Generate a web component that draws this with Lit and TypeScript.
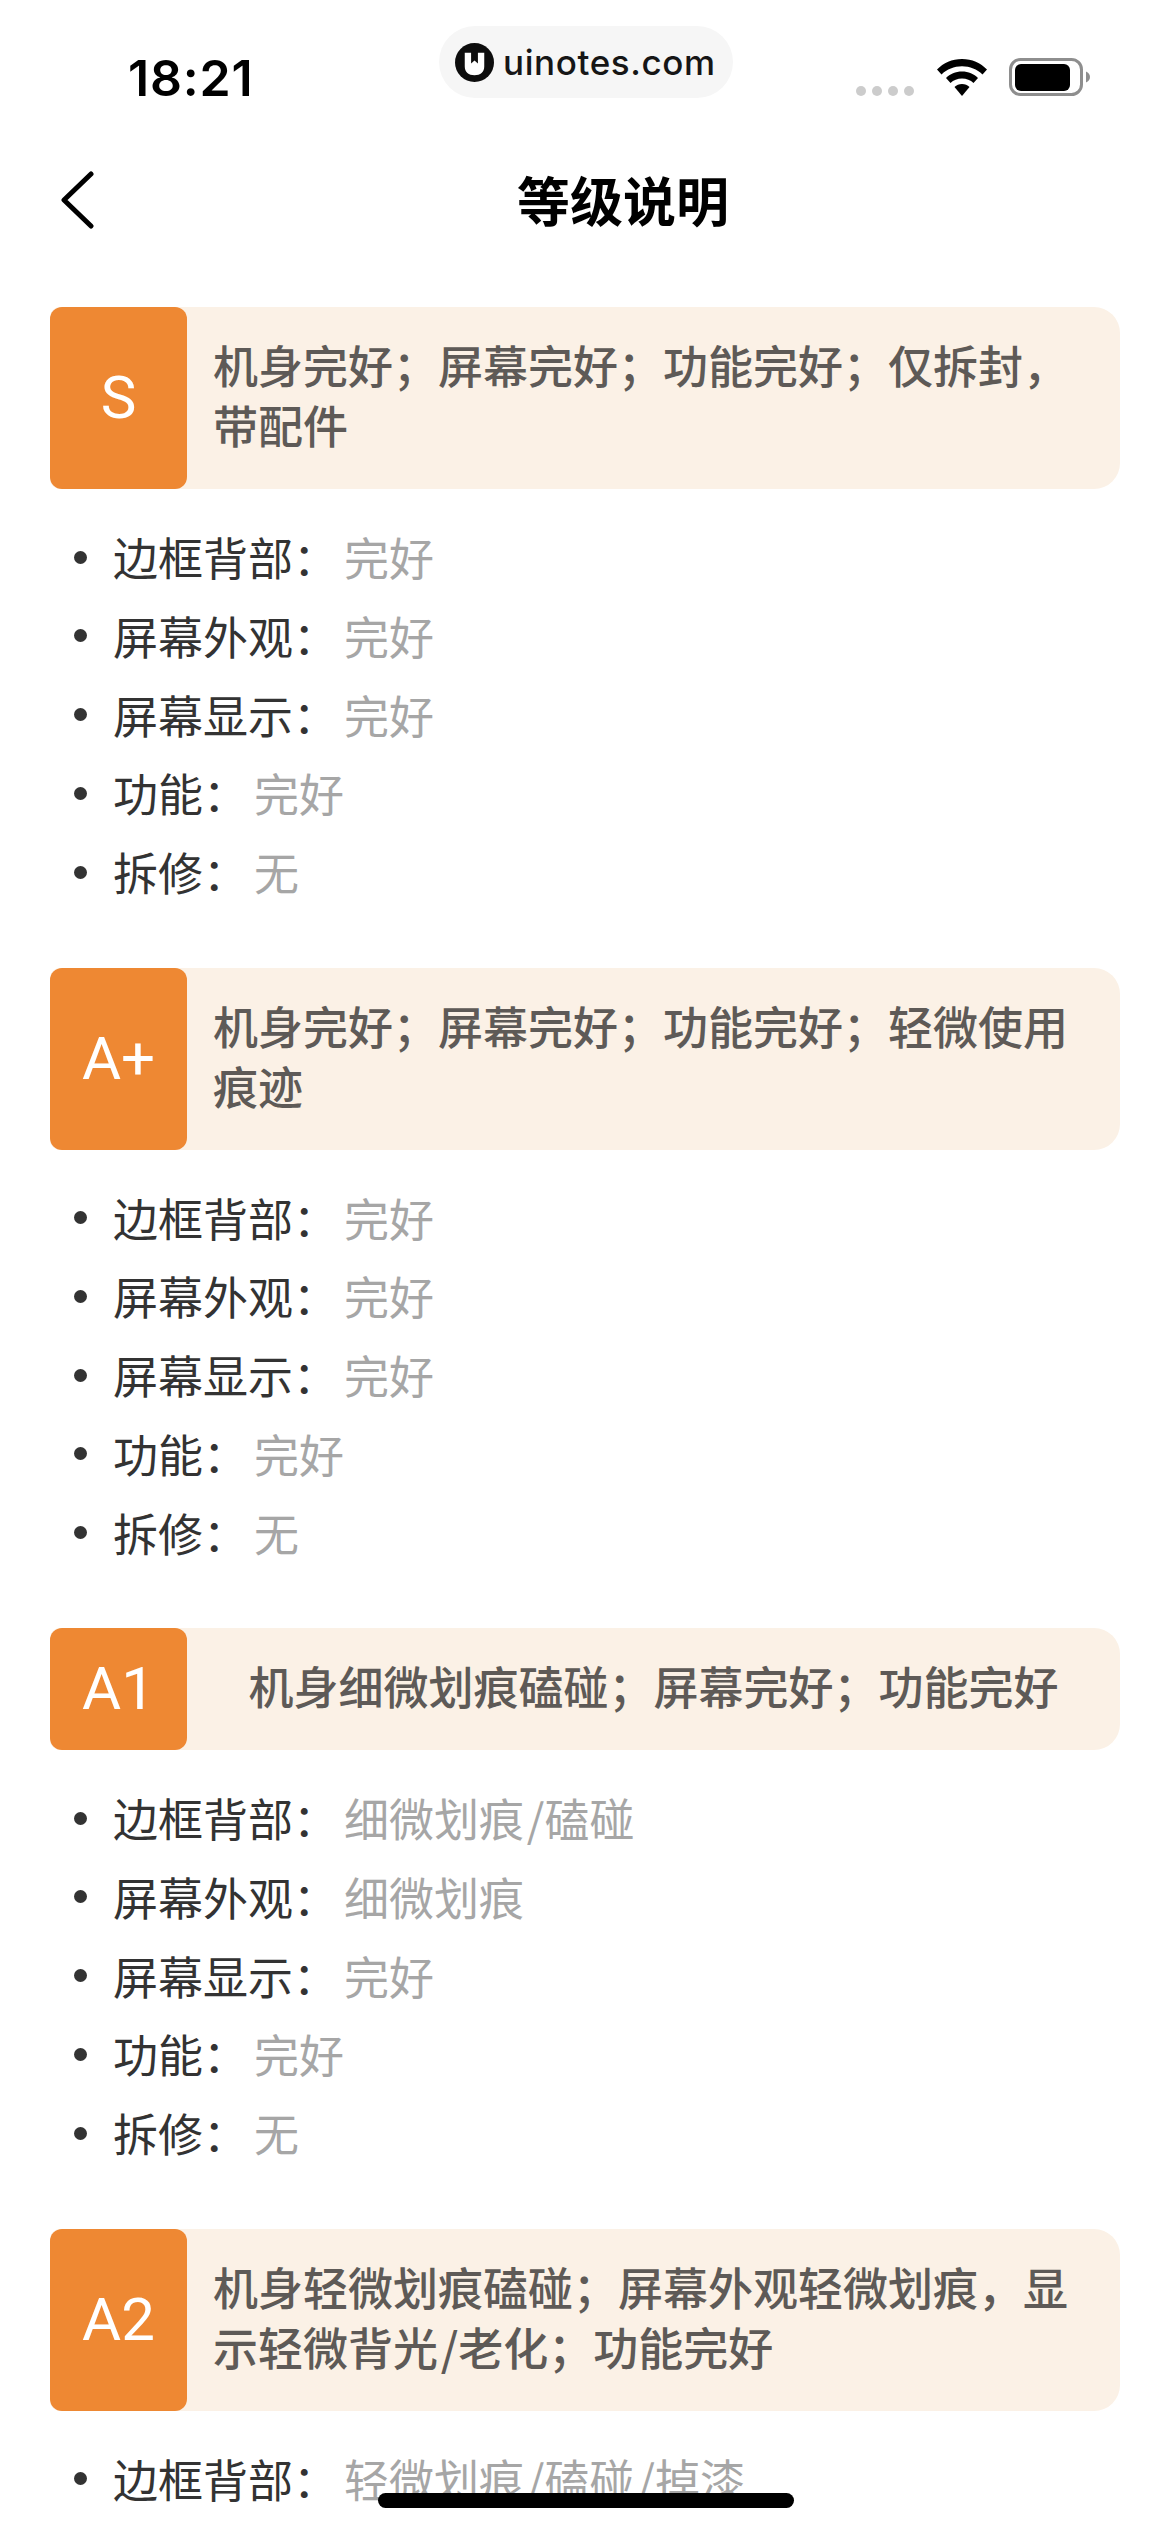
import { LitElement, html, css, svg } from 'lit';
import { customElement } from 'lit/decorators.js';

interface Spec {
  label: string;
  value: string;
}

interface Grade {
  name: string;
  summary: string;
  specs: Spec[];
}

const specs = (frame: string, look: string): Spec[] => [
  { label: '边框背部：', value: frame },
  { label: '屏幕外观：', value: look },
  { label: '屏幕显示：', value: '完好' },
  { label: '功能：', value: '完好' },
  { label: '拆修：', value: '无' },
];

const GRADES: Grade[] = [
  { name: 'S', summary: '机身完好；屏幕完好；功能完好；仅拆封，带配件', specs: specs('完好', '完好') },
  { name: 'A+', summary: '机身完好；屏幕完好；功能完好；轻微使用痕迹', specs: specs('完好', '完好') },
  { name: 'A1', summary: '机身细微划痕磕碰；屏幕完好；功能完好', specs: specs('细微划痕/磕碰', '细微划痕') },
  {
    name: 'A2',
    summary: '机身轻微划痕磕碰；屏幕外观轻微划痕，显示轻微背光/老化；功能完好',
    // the rest of this list is below the fold
    specs: [{ label: '边框背部：', value: '轻微划痕/磕碰/掉漆' }],
  },
];

const wifiIcon = svg`
  <path d="M25 0C15 0 6.500 4 0 10.500L4.500 15.500C10 10.300 17 7.300 25 7.300S40 10.300 45.500 15.500L50 10.500C43.500 4 35 0 25 0Z"/>
  <path d="M25 12.500C18.500 12.500 13 15 9 19L13.500 24C16.500 21.200 20.500 19.500 25 19.500S33.500 21.200 36.500 24L41 19C37 15 31.500 12.500 25 12.500Z"/>
  <path d="M25 25C22 25 19.500 26 17.500 28L25 37L32.500 28C30.500 26 28 25 25 25Z"/>
`;

// the slash sits wider in the reference font than in Noto, a hair space makes up for it
const spaced = (text: string) => text.split('/').join('\u200a/');

@customElement('app-root')
export class AppRoot extends LitElement {
  static styles = css`
    :host {
      display: block;
      position: relative;
      width: 1170px;
      height: 2532px;
      overflow: hidden;
      background: #fff;
      font-family: "Noto Sans CJK SC", "Noto Sans", sans-serif;
    }

    .status {
      display: flex;
      align-items: flex-start;
      height: 130px;
      padding: 26px 79px 0 128px;
      box-sizing: border-box;
    }

    .time {
      width: 311px;
      margin-top: 23px;
      font: 600 50px/58px Inter, sans-serif;
      letter-spacing: 0.8px;
      color: #000;
    }

    .pill {
      display: flex;
      align-items: center;
      gap: 9px;
      width: 294px;
      height: 72px;
      padding-left: 16px;
      box-sizing: border-box;
      border-radius: 36px;
      background: #f6f6f6;
    }

    .pill-logo {
      width: 39px;
      height: 39px;
    }

    .pill-text {
      font: 500 35px/40px Inter, sans-serif;
      letter-spacing: 0.6px;
      color: #161616;
    }

    .indicators {
      display: flex;
      align-items: flex-end;
      margin-top: 32px;
      margin-left: 123px;
    }

    .dots {
      display: flex;
      gap: 6px;
      margin-right: 23px;
    }

    .dots span {
      width: 10px;
      height: 10px;
      border-radius: 50%;
      background: #ccc;
    }

    .wifi {
      width: 50px;
      height: 37px;
      margin-right: 22px;
    }

    .battery {
      display: block;
      width: 82px;
      height: 38px;
    }

    .nav {
      display: flex;
      align-items: center;
      height: 142px;
      padding-left: 60px;
      margin-bottom: 35px;
    }

    .back {
      width: 34px;
      height: 58px;
      flex: none;
      margin-top: -2px;
    }

    .nav-title {
      flex: 1;
      padding: 0 18px 5px 0;
      text-align: center;
      font-size: 53px;
      line-height: 64px;
      font-weight: 600;
      color: #000;
    }

    .grades {
      padding: 0 50px;
    }

    .grade {
      margin-bottom: 65.500px;
    }

    .head {
      display: flex;
      align-items: stretch;
      width: 1070px;
      border-radius: 10px 26px 26px 10px;
      background: #fbf1e6;
    }

    .badge {
      display: flex;
      flex: none;
      align-items: center;
      justify-content: center;
      width: 137px;
      border-radius: 12px;
      background: #ee8833;
      color: #fff;
      font: 400 60px/1 Roboto, sans-serif;
    }

    .summary {
      display: flex;
      flex: 1;
      align-items: center;
      justify-content: center;
      padding: 28px 26px 34px;
      font-size: 45px;
      line-height: 60px;
      font-weight: 500;
      color: #5e5a57;
    }

    .specs {
      display: flex;
      flex-direction: column;
      gap: 18.750px;
      margin: 0;
      padding: 38px 0 0;
      list-style: none;
    }

    .spec {
      display: flex;
      align-items: center;
      height: 60px;
      font-size: 45px;
      line-height: 60px;
      color: #333;
    }

    .spec::before {
      content: '';
      flex: none;
      width: 13px;
      height: 13px;
      margin: 0 26px 0 24px;
      border-radius: 50%;
      background: #333;
    }

    .spec-value {
      margin-left: 6px;
      color: #a6a6a6;
    }

    .home {
      position: absolute;
      left: 378px;
      top: 2493px;
      width: 416px;
      height: 15px;
      border-radius: 8px;
      background: #000;
    }
  `;

  renderStatus() {
    return html`
      <div class="status">
        <div class="time">18:21</div>
        <div class="pill">
          <svg class="pill-logo" viewBox="0 0 40 40">
            <circle cx="20" cy="20" r="20" fill="#0d0d0d"/>
            <path d="M10 10h6.500v11l3.500-3 3.500 3V10H30v14c0 5.500-4 9-10 9s-10-3.500-10-9Z" fill="#fff"/>
          </svg>
          <span class="pill-text">uinotes.com</span>
        </div>
        <div class="indicators">
          <div class="dots"><span></span><span></span><span></span><span></span></div>
          <svg class="wifi" viewBox="0 0 50 37" fill="#000">${wifiIcon}</svg>
          <svg class="battery" viewBox="0 0 82 38">
            <rect x="1.500" y="1.500" width="71" height="35" rx="10" fill="none" stroke="#8e8e8e" stroke-width="3"/>
            <rect x="6" y="6" width="55" height="27" rx="6" fill="#000"/>
            <path d="M77 13.500c2.500 1 4 3 4 5.500s-1.500 4.500-4 5.500Z" fill="#8e8e8e"/>
          </svg>
        </div>
      </div>
    `;
  }

  renderGrade(grade: Grade) {
    return html`
      <section class="grade">
        <div class="head">
          <div class="badge">${grade.name}</div>
          <div class="summary"><span>${spaced(grade.summary)}</span></div>
        </div>
        <ul class="specs">
          ${grade.specs.map((spec) => html`
            <li class="spec">
              <span>${spec.label}</span>
              <span class="spec-value">${spaced(spec.value)}</span>
            </li>
          `)}
        </ul>
      </section>
    `;
  }

  render() {
    return html`
      ${this.renderStatus()}
      <div class="nav">
        <svg class="back" viewBox="0 0 34 58" fill="none" stroke="#000" stroke-width="5" stroke-linecap="round" stroke-linejoin="round">
          <path d="M31 3L4 29L31 55"/>
        </svg>
        <div class="nav-title">等级说明</div>
      </div>
      <div class="grades">
        ${GRADES.map((grade) => this.renderGrade(grade))}
      </div>
      <div class="home"></div>
    `;
  }
}
